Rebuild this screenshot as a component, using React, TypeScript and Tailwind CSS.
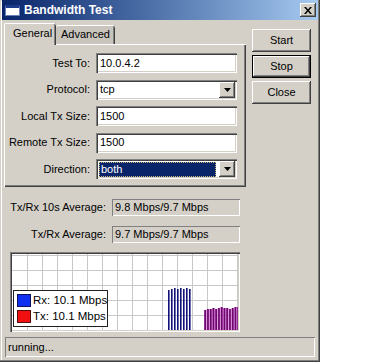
import React from "react";

const raised =
  "shadow-[inset_-1px_-1px_#404040,inset_1px_1px_#ffffff,inset_-2px_-2px_#808080]";
const sunken2 =
  "shadow-[inset_1px_1px_#808080,inset_2px_2px_#404040,inset_-1px_-1px_#ffffff,inset_-2px_-2px_#d4d0c8]";
const sunken1 = "shadow-[inset_1px_1px_#808080,inset_-1px_-1px_#ffffff]";

function Arrow() {
  return (
    <div className={`w-[16px] h-[16px] bg-[#d4d0c8] ${raised} flex items-center justify-center`}>
      <svg width="7" height="4" viewBox="0 0 7 4">
        <path d="M0 0 H7 L3.5 4 Z" fill="#000" />
      </svg>
    </div>
  );
}

function Row({ label, children }: { label: string; children: React.ReactNode }) {
  return (
    <div className="flex items-center h-[20px]">
      <div className="w-[86px] text-right whitespace-nowrap">{label}</div>
      <div className="ml-[6px] w-[141px] h-[20px]">{children}</div>
    </div>
  );
}

function TextBox({ value }: { value: string }) {
  return (
    <div className={`w-full h-full bg-white ${sunken2} flex items-center pl-[4px]`}>{value}</div>
  );
}

function Combo({ value, selected }: { value: string; selected?: boolean }) {
  return (
    <div className={`w-full h-full bg-white ${sunken2} flex items-center p-[2px]`}>
      {selected ? (
        <div className="flex-1 h-[15px] ml-[1px] mr-[3px] bg-[#0a246a] text-white border border-dotted border-[#c8b878] flex items-center pl-[1px]">
          {value}
        </div>
      ) : (
        <div className="flex-1 pl-[2px]">{value}</div>
      )}
      <Arrow />
    </div>
  );
}

function Button({ label, isDefault }: { label: string; isDefault?: boolean }) {
  return (
    <div
      className={`w-[59px] h-[23px] flex items-center justify-center bg-[#d4d0c8] ${
        isDefault ? "border border-black" : ""
      } ${raised}`}
    >
      {label}
    </div>
  );
}

function Field({ label, value }: { label: string; value: string }) {
  return (
    <div className="flex items-center h-[17px]">
      <div className="w-[104px] text-right whitespace-nowrap">{label}</div>
      <div className={`ml-[6px] w-[128px] h-[17px] ${sunken1} flex items-center pl-[3px]`}>
        {value}
      </div>
    </div>
  );
}

function Graph() {
  const vlines = Array.from({ length: 15 }, (_, i) => 15 + i * 15);
  const hlines = [1, 16, 31, 46, 61];
  const rx = Array.from({ length: 8 }, (_, i) => 156 + i * 3);
  const rxTop = [36, 35, 34, 35, 34, 35, 34, 35];
  const tx = Array.from({ length: 13 }, (_, i) => 192 + i * 2.75);
  const txTop = [56, 55, 55, 54, 55, 54, 53, 54, 54, 55, 54, 53, 53];
  return (
    <svg width="226" height="76" viewBox="0 0 226 76" className="block">
      <rect width="226" height="76" fill="#ffffff" />
      {vlines.map((x) => (
        <line key={"v" + x} x1={x + 0.5} y1={0} x2={x + 0.5} y2={76} stroke="#c8c8c8" strokeWidth="1" />
      ))}
      {hlines.map((y) => (
        <line key={"h" + y} x1={0} y1={y + 0.5} x2={226} y2={y + 0.5} stroke="#c8c8c8" strokeWidth="1" />
      ))}
      {rx.map((x, i) => (
        <rect key={"r" + i} x={x} y={rxTop[i]} width="1.6" height={76 - rxTop[i]} fill="#12127a" />
      ))}
      {tx.map((x, i) => (
        <g key={"t" + i}>
          <rect x={x} y={txTop[i]} width="2.5" height={76 - txTop[i]} fill="#d060d0" />
          <rect x={x + 0.4} y={txTop[i]} width="1.6" height={76 - txTop[i]} fill="#6a0a6a" />
        </g>
      ))}
    </svg>
  );
}

export default function App() {
  return (
    <div className="w-[368px] h-[362px] bg-white font-['Liberation_Sans',Arial,sans-serif] text-[11px] leading-none text-black">
      <div className="w-[320px] h-[362px] bg-[#d4d0c8] shadow-[inset_-1px_-1px_#404040,inset_-2px_-2px_#808080,inset_1px_1px_#d4d0c8,inset_2px_2px_#ffffff] flex flex-col px-[2px] pb-[2px]">
        {/* Title bar */}
        <div className="h-[20px] shrink-0 bg-linear-to-r from-[#0a246a] to-[#a6caf0] flex items-center pl-[3px] pr-[2px]">
          <div className="w-[15px] h-[11px] bg-white border border-[#6a7fb8] border-t-[3px] border-t-[#1a3a8a]" />
          <span className="ml-[4px] text-white font-bold text-[12px]">Bandwidth Test</span>
          <div className={`ml-auto w-[16px] h-[14px] bg-[#d4d0c8] ${raised} flex items-center justify-center`}>
            <svg width="8" height="7" viewBox="0 0 8 7">
              <path d="M0 0 H2 L4 2.5 L6 0 H8 L5 3.5 L8 7 H6 L4 4.5 L2 7 H0 L3 3.5 Z" fill="#000" />
            </svg>
          </div>
        </div>

        {/* Body */}
        <div className="flex mt-[3px]">
          <div className="ml-[2px] w-[242px] flex flex-col">
            <div className="flex items-end h-[21px]">
              <div className="relative z-10 -mb-[1px] w-[52px] h-[22px] bg-[#d4d0c8] rounded-t-[2px] shadow-[inset_1px_0_#ffffff,inset_0_1px_#ffffff,inset_-1px_0_#404040,inset_-2px_0_#808080] flex items-center pl-[9px] pb-[2px]">
                General
              </div>
              <div className="w-[59px] h-[19px] bg-[#c9c5bd] rounded-t-[2px] shadow-[inset_0_1px_#ffffff,inset_-1px_0_#404040,inset_-2px_0_#808080] flex items-center pl-[5px]">
                Advanced
              </div>
            </div>
            <div className="h-[143px] bg-[#d4d0c8] shadow-[inset_1px_1px_#ffffff,inset_-1px_-1px_#404040,inset_-2px_-2px_#808080] flex flex-col gap-[6.5px] pt-[9px]">
              <Row label="Test To:">
                <TextBox value="10.0.4.2" />
              </Row>
              <Row label="Protocol:">
                <Combo value="tcp" />
              </Row>
              <Row label="Local Tx Size:">
                <TextBox value="1500" />
              </Row>
              <Row label="Remote Tx Size:">
                <TextBox value="1500" />
              </Row>
              <Row label="Direction:">
                <Combo value="both" selected />
              </Row>
            </div>
          </div>
          <div className="ml-[6px] mt-[6px] flex flex-col gap-[3px]">
            <Button label="Start" />
            <Button label="Stop" isDefault />
            <Button label="Close" />
          </div>
        </div>

        {/* Averages */}
        <div className="mt-[12px] flex flex-col gap-[10px]">
          <Field label="Tx/Rx 10s Average:" value="9.8 Mbps/9.7 Mbps" />
          <Field label="Tx/Rx Average:" value="9.7 Mbps/9.7 Mbps" />
        </div>

        {/* Graph */}
        <div className={`relative mt-[9px] ml-[8px] w-[230px] h-[80px] p-[2px] bg-white ${sunken2}`}>
          <Graph />
          <div className="absolute left-[3px] top-[38px] w-[95px] h-[37px] bg-white border border-[#202020] flex flex-col justify-center gap-[3px] pl-[3px] whitespace-nowrap">
            <div className="flex items-center gap-[2px]">
              <div className="w-[14px] h-[13px] shrink-0 bg-[#1030f0] border border-[#101060]" />
              <span className="text-[11.5px]">Rx: 10.1 Mbps</span>
            </div>
            <div className="flex items-center gap-[2px]">
              <div className="w-[14px] h-[13px] shrink-0 bg-[#f01010] border border-[#501010]" />
              <span className="text-[11.5px]">Tx: 10.1 Mbps</span>
            </div>
          </div>
        </div>

        {/* Status bar */}
        <div className={`mt-[5px] mx-[3px] h-[20px] ${sunken1} flex items-center pl-[3px]`}>running...</div>
      </div>
    </div>
  );
}
